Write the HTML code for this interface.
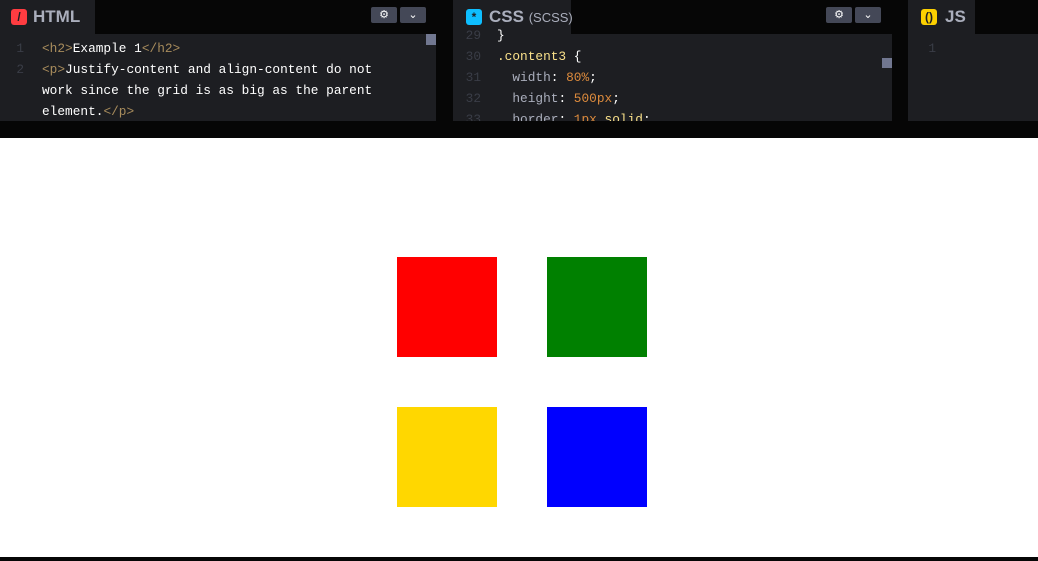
<!DOCTYPE html>
<html><head><style>
body{margin:0;width:1038px;height:561px;position:relative;overflow:hidden;background:#fff;font-family:"Liberation Sans",sans-serif}
.top{position:absolute;left:0;top:0;width:1038px;height:138px;background:#060606}
.panel{position:absolute;top:0;height:121px;background:#1d1e22;overflow:hidden}
.hdr{position:absolute;left:0;top:0;right:0;height:34px;background:#060606}
.tab{position:absolute;left:0;top:0;height:34px;background:#1d1e22;color:#aaaebc;font-weight:bold;font-size:17px;line-height:34px;white-space:nowrap}
.ic{position:absolute;top:9px;width:16px;height:16px;border-radius:3px;color:#1d1e22;font-size:12px;line-height:16px;text-align:center;font-weight:bold}
.code{position:absolute;font-family:"Liberation Mono",monospace;font-size:12.8px;line-height:21px;color:#fff;white-space:pre}
.ln{position:absolute;left:0;width:28px;text-align:right;color:#3a3d47;font-family:"Liberation Mono",monospace;font-size:12.8px;line-height:21px}
.t{color:#a88c5c}.p{color:#aaaebc}.o{color:#dd8b3d}.y{color:#f9e08a}
.btn{position:absolute;top:7px;width:26px;height:16px;background:#444857;border-radius:2px;color:#fff;font-size:11px;text-align:center;line-height:16px}
.sq{position:absolute;width:100px;height:100px}
</style></head><body>
<div class="top"></div>
<div class="panel" style="left:0;width:436px">
 <div class="hdr"></div>
 <div class="tab" style="width:95px"><div class="ic" style="left:11px;background:#ff3c41">/</div><span style="position:absolute;left:33px">HTML</span></div>
 <div class="btn" style="left:371px">⚙</div><div class="btn" style="left:400px">⌄</div>
 <div style="position:absolute;left:426px;top:34px;width:10px;height:11px;background:#717790"></div>
 <div class="ln" style="top:38px;width:24px">1</div><div class="ln" style="top:59px;width:24px">2</div>
 <div class="code" style="left:42px;top:38px"><span class="t">&lt;h2&gt;</span>Example 1<span class="t">&lt;/h2&gt;</span>
<span class="t">&lt;p&gt;</span>Justify-content and align-content do not
work since the grid is as big as the parent
element.<span class="t">&lt;/p&gt;</span></div>
</div>
<div class="panel" style="left:453px;width:439px">
 <div class="hdr"></div>
 <div class="tab" style="width:118px"><div class="ic" style="left:13px;background:#0ebeff">*</div><span style="position:absolute;left:36px">CSS <span style="font-weight:normal;font-size:13px">(SCSS)</span></span></div>
 <div class="btn" style="left:373px">⚙</div><div class="btn" style="left:402px">⌄</div>
 <div style="position:absolute;left:429px;top:58px;width:10px;height:10px;background:#717790"></div>
 <div class="ln" style="top:25px">29</div><div class="ln" style="top:46px">30</div><div class="ln" style="top:67px">31</div><div class="ln" style="top:88px">32</div><div class="ln" style="top:109px">33</div>
 <div class="code" style="left:44px;top:25px">}
<span class="y">.content3 </span>{
  <span class="p">width</span>: <span class="o">80%</span>;
  <span class="p">height</span>: <span class="o">500px</span>;
  <span class="p">border</span>: <span class="o">1px</span> <span class="y">solid</span>;</div>
</div>
<div class="panel" style="left:908px;width:130px">
 <div class="hdr"></div>
 <div class="tab" style="width:67px"><div class="ic" style="left:13px;background:#fcd000">()</div><span style="position:absolute;left:37px">JS</span></div>
 <div class="ln" style="top:38px">1</div>
</div>
<div class="sq" style="left:397px;top:257px;background:#f00"></div>
<div class="sq" style="left:547px;top:257px;background:#008000"></div>
<div class="sq" style="left:397px;top:407px;background:#ffd700"></div>
<div class="sq" style="left:547px;top:407px;background:#00f"></div>
<div style="position:absolute;left:0;top:557px;width:1038px;height:4px;background:#060606"></div>
</body></html>
